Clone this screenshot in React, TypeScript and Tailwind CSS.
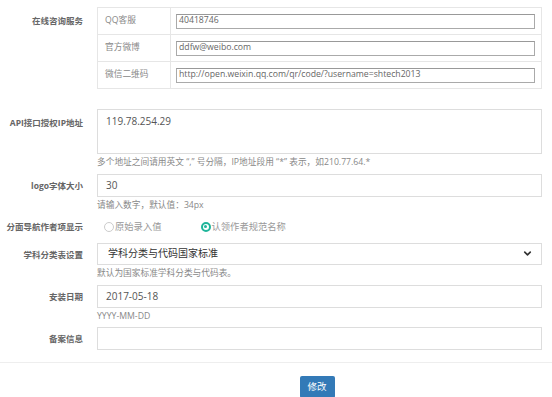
import { ChevronDown } from "lucide-react";

const font = { fontFamily: '"Open Sans", "Noto Sans CJK SC", sans-serif' };

function Label({ children, className = "" }: { children: React.ReactNode; className?: string }) {
  return (
    <div className={"w-[83px] shrink-0 text-right text-[8.5px] font-bold text-[#666] " + className}>
      {children}
    </div>
  );
}

function Help({ children }: { children: React.ReactNode }) {
  return <div className="mt-[3px] text-[8.7px] leading-[10px] text-[#888]">{children}</div>;
}

const contacts = [
  { name: "QQ客服", value: "40418746" },
  { name: "官方微博", value: "ddfw@weibo.com" },
  { name: "微信二维码", value: "http://open.weixin.qq.com/qr/code/?username=shtech2013" },
];

export default function App() {
  return (
    <div style={font} className="w-[552px] h-[397px] overflow-hidden bg-white">
      <div className="flex gap-[14px] pt-[7px]">
        <Label className="pt-[8px]">在线咨询服务</Label>
        <table className="w-[445px] border-collapse border border-[#e6e6e6]">
          <tbody>
            {contacts.map((c) => (
              <tr key={c.name} className="h-[27px] border-b border-[#e6e6e6]">
                <td className="w-[73px] border-r border-[#e6e6e6] pl-[7px] text-[8.7px] text-[#888]">{c.name}</td>
                <td className="pl-[5px] pr-[6px]">
                  <div className="flex h-[15px] items-center border border-[#aaa] border-t-[#999] pl-[2px] text-[8.7px] text-[#666]">
                    {c.value}
                  </div>
                </td>
              </tr>
            ))}
          </tbody>
        </table>
      </div>

      <div className="mt-[20px] flex gap-[14px]">
        <Label className="pt-[8px]">API接口授权IP地址</Label>
        <div className="w-[445px]">
          <div className="h-[45px] border border-[#ddd] px-[8px] pt-[4px] text-[10px] text-[#555]">119.78.254.29</div>
          <Help>多个地址之间请用英文 “,” 号分隔，IP地址段用 “*” 表示，如210.77.64.*</Help>
        </div>
      </div>

      <div className="mt-[7px] flex gap-[14px]">
        <Label className="pt-[6px]">logo字体大小</Label>
        <div className="w-[445px]">
          <div className="flex h-[23px] items-center border border-[#ddd] px-[8px] text-[10px] text-[#555]">30</div>
          <Help>请输入数字，默认值：34px</Help>
        </div>
      </div>

      <div className="mt-[10px] flex items-center gap-[14px]">
        <Label>分面导航作者项显示</Label>
        <div className="flex items-center text-[9.3px] text-[#999]">
          <span className="ml-[7px] mr-[1px] h-[10px] w-[10px] rounded-full border border-[#ccc]" />
          原始录入值
          <span className="ml-[39px] mr-[1px] flex h-[10px] w-[10px] items-center justify-center rounded-full border-2 border-[#1fb59a]">
            <span className="h-[3px] w-[3px] rounded-full bg-[#1fb59a]" />
          </span>
          认领作者规范名称
        </div>
      </div>

      <div className="mt-[9px] flex gap-[14px]">
        <Label className="pt-[6px]">学科分类表设置</Label>
        <div className="w-[445px]">
          <div className="flex h-[22px] items-center justify-between border border-[#ddd] pl-[10px] pr-[8px] text-[10px] text-[#333]">
            学科分类与代码国家标准
            <ChevronDown size={11} strokeWidth={3.5} className="text-[#333]" />
          </div>
          <Help>默认为国家标准学科分类与代码表。</Help>
        </div>
      </div>

      <div className="mt-[7px] flex gap-[14px]">
        <Label className="pt-[6px]">安装日期</Label>
        <div className="w-[445px]">
          <div className="flex h-[23px] items-center border border-[#ddd] px-[8px] text-[10px] text-[#555]">2017-05-18</div>
          <Help>YYYY-MM-DD</Help>
        </div>
      </div>

      <div className="mt-[6px] flex gap-[14px]">
        <Label className="pt-[6px]">备案信息</Label>
        <div className="h-[23px] w-[445px] border border-[#ddd]" />
      </div>

      <div className="mt-[12px] flex justify-center border-t border-[#eee] pt-[13px]">
        <button className="ml-[82px] h-[22px] w-[35px] rounded-[2px] bg-[#337ab7] text-[9.5px] text-white">修改</button>
      </div>
    </div>
  );
}
